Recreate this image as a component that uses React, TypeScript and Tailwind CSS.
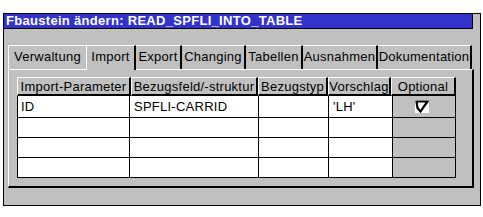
import React from "react";

const tabs = [
    { label: "Verwaltung", w: "w-[78px]", edge: "border-l" },
    { label: "Import", w: "w-[50px]", edge: "border-l", active: true },
    { label: "Export", w: "w-[46px]" },
    { label: "Changing", w: "w-[64px]" },
    { label: "Tabellen", w: "w-[57px]" },
    { label: "Ausnahmen", w: "w-[75px]" },
    { label: "Dokumentation", w: "w-[94px]" },
];

const headers = [
    { label: "Import-Parameter", w: "w-[114px]" },
    { label: "Bezugsfeld/-struktur", w: "w-[127px]" },
    { label: "Bezugstyp", w: "w-[70px]" },
    { label: "Vorschlag", w: "w-[63px]" },
    { label: "Optional", w: "w-[65px]" },
];

const rows = [
    { param: "ID", field: "SPFLI-CARRID", type: "", def: "'LH'", optional: true },
    { param: "", field: "", type: "", def: "", optional: false },
    { param: "", field: "", type: "", def: "", optional: false },
    { param: "", field: "", type: "", def: "", optional: false },
];

function CheckBox() {
    return (
        <svg width="14" height="13" viewBox="0 0 14 13" className="block">
            <rect x="0" y="0" width="14" height="13" fill="#ffffff" />
            <path d="M1.5 1.5 H12.5 L5.5 11.5 L2.5 8 Z" fill="none" stroke="#000" strokeWidth="2.2" strokeLinejoin="miter" />
        </svg>
    );
}

export default function App() {
    return (
        <div className="min-h-[217px] bg-white pt-[13px] pl-[3px] font-['Liberation_Sans',Arial,sans-serif] text-[13px] tracking-[0.25px] text-black">
            <div className="w-[478px] h-[193px] border border-black bg-[#c0c0c0]">
                {/* Titelleiste */}
                <div className="w-[469px] h-[15px] bg-[#3333cc] border-r border-b border-black pl-[2px] text-white font-bold leading-[13px] tracking-[0.3px] whitespace-nowrap">
                    Fbaustein ändern: READ_SPFLI_INTO_TABLE
                </div>

                {/* Reiter */}
                <div className="ml-[4px] mt-[16px] flex items-end">
                    {tabs.map((t) => (
                        <div
                            key={t.label}
                            className={`${t.w} h-[24px] border-t border-white ${t.edge ? "border-l" : ""} ${t.label === "Verwaltung" ? "" : "border-r-2 border-r-black"} ${t.active ? "relative z-10 -mb-px h-[25px] bg-[#c0c0c0]" : ""} flex items-start justify-center pt-[3px] leading-[15px] whitespace-nowrap overflow-hidden`}
                        >
                            {t.label}
                        </div>
                    ))}
                </div>

                {/* Reiterinhalt */}
                <div className="ml-[4px] w-[466px] h-[119px] border-t border-l border-white border-r-2 border-r-black border-b-2 border-b-black pl-[8px] pt-[7px]">
                    <div className="w-[439px]">
                        <div className="flex h-[19px]">
                            {headers.map((h) => (
                                <div
                                    key={h.label}
                                    className={`${h.w} h-[19px] border-t border-l border-white border-r-2 border-r-black border-b-2 border-b-black flex items-center justify-center leading-[15px] whitespace-nowrap overflow-hidden`}
                                >
                                    {h.label}
                                </div>
                            ))}
                        </div>
                        {rows.map((r, i) => (
                            <div key={i} className={`flex ${i === 0 ? "h-[22px]" : "h-[20px]"} border-b border-black`}>
                                <div className="w-[113px] border-l border-r border-black bg-white pl-[3px] flex items-center whitespace-nowrap">
                                    {r.param}
                                </div>
                                <div className="w-[129px] border-r border-black bg-white pl-[4px] flex items-center whitespace-nowrap">
                                    {r.field}
                                </div>
                                <div className="w-[70px] border-r border-black bg-white pl-[3px] flex items-center whitespace-nowrap">
                                    {r.type}
                                </div>
                                <div className="w-[64px] border-r border-black bg-white pl-[4px] flex items-center whitespace-nowrap">
                                    {r.def}
                                </div>
                                <div className="w-[63px] border-r border-black bg-[#c0c0c0] pl-[22px] flex items-center">
                                    {r.optional && <CheckBox />}
                                </div>
                            </div>
                        ))}
                    </div>
                </div>
            </div>
        </div>
    );
}
